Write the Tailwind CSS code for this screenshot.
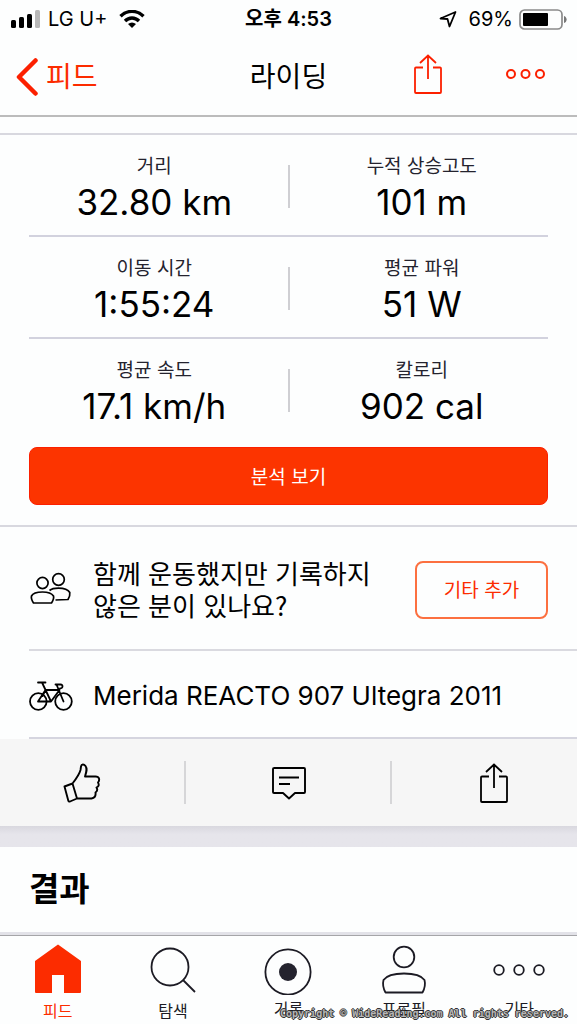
<!DOCTYPE html>
<html lang="ko">
<head>
<meta charset="utf-8">
<meta name="viewport" content="width=device-width, initial-scale=1">
<title>라이딩</title>
<script src="https://cdn.jsdelivr.net/npm/@tailwindcss/browser@4"></script>
</head>
<body class="relative flex min-h-screen flex-col bg-[#fdfefe] font-['Inter','Noto_Sans_CJK_KR',sans-serif] text-black">

<!-- Status bar -->
<div class="grid h-[38px] grid-cols-[1fr_auto_1fr] items-center px-2.5 text-xl leading-6">
  <div class="flex items-center gap-2">
    <svg class="h-[18px] w-[30px]" viewBox="0 0 30 18"><rect x="1" y="10" width="5" height="8" rx="1.5"/><rect x="9" y="7" width="5" height="11" rx="1.5"/><rect x="17" y="4" width="5" height="14" rx="1.5"/><rect x="25" y="0" width="5" height="18" rx="1.5" fill="#b8b8b8"/></svg>
    <span>LG U+</span>
    <svg class="ml-1 h-[18px] w-[26px]" viewBox="0 0 26 18" fill="none" stroke="#000" stroke-width="3.4"><path d="M1.5 6.2C8-.2 18-.2 24.500 6.200"/><path d="M6 11C10 7 16 7 20 11"/><path d="M13 18L9 14C11.500 12 14.500 12 17 14Z" fill="#000" stroke="none"/></svg>
  </div>
  <div class="font-semibold">오후 4:53</div>
  <div class="flex items-center justify-end">
    <svg class="mr-3 h-[17px] w-[18px]" viewBox="0 0 18 17" fill="none" stroke="#000" stroke-width="1.8" stroke-linejoin="round"><path d="M16.500 1L1.500 7.500L8.500 8L10.500 15.500Z"/></svg>
    <span>69%</span>
    <svg class="ml-1.5 h-[21px] w-[48px]" viewBox="0 0 48 21"><rect x="1" y="1" width="42" height="19" rx="4.500" fill="none" stroke="#8a8a8a" stroke-width="1.700"/><rect x="4" y="4" width="25" height="13" rx="1"/><path d="M45 7C48.500 8 48.500 13 45 14Z" fill="#777"/></svg>
  </div>
</div>

<!-- Navigation -->
<header class="grid h-[79px] grid-cols-[1fr_auto_1fr] items-center border-b-2 border-[#bcbcbc] px-4 text-[28px] leading-9">
  <a href="#" class="flex items-center gap-2 text-[#fc2c00]">
    <svg class="h-[38px] w-[22px]" viewBox="0 0 22 38" fill="none" stroke="#fc2000" stroke-width="4.500" stroke-linecap="round" stroke-linejoin="round"><path d="M19.500 2.500L3 19L19.500 35.500"/></svg>
    <span>피드</span>
  </a>
  <h1>라이딩</h1>
  <div class="flex items-center justify-end gap-[62px] pr-4 pb-1.5">
    <button type="button" aria-label="공유"><svg class="block h-10 w-[30px]" viewBox="0 0 30 40" fill="none" stroke="#fc2000" stroke-width="1.800"><path d="M10 13.500H3Q2 13.500 2 14.500V38Q2 39 3 39H27Q28 39 28 38V14.500Q28 13.500 27 13.500H20M15 25V2M7 9L15 1.500L23 9"/></svg></button>
    <button type="button" aria-label="더 보기"><svg class="block h-3 w-[40px]" viewBox="0 0 40 12" fill="none" stroke="#fc2000" stroke-width="2"><circle cx="6" cy="6" r="4"/><circle cx="20.500" cy="6" r="4"/><circle cx="35" cy="6" r="4"/></svg></button>
  </div>
</header>

<main class="flex flex-1 flex-col">
  <div class="h-4"></div>

  <!-- Ride statistics -->
  <section class="border-t-2 border-b-2 border-[#d8d8df] px-[29px] pb-5">
    <dl>
      <div class="grid h-[102px] grid-cols-[1fr_2px_1fr] items-center border-b-2 border-[#d2d2de] text-center">
        <div class="pt-1.5 pr-2"><dt class="text-[19px] leading-7 text-[#24232e]">거리</dt><dd class="text-[35px] leading-[42px]">32.80 km</dd></div>
        <div class="mt-0.5 h-[43px] bg-[#cfcfd3]"></div>
        <div class="pt-1.5 pl-1.5"><dt class="text-[19px] leading-7 text-[#24232e]">누적 상승고도</dt><dd class="text-[35px] leading-[42px]">101 m</dd></div>
      </div>
      <div class="grid h-[102px] grid-cols-[1fr_2px_1fr] items-center border-b-2 border-[#d2d2de] text-center">
        <div class="pt-1.5 pr-2"><dt class="text-[19px] leading-7 text-[#24232e]">이동 시간</dt><dd class="text-[35px] leading-[42px]">1:55:24</dd></div>
        <div class="mt-0.5 h-[43px] bg-[#cfcfd3]"></div>
        <div class="pt-1.5 pl-1.5"><dt class="text-[19px] leading-7 text-[#24232e]">평균 파워</dt><dd class="text-[35px] leading-[42px]">51 W</dd></div>
      </div>
      <div class="grid h-[102px] grid-cols-[1fr_2px_1fr] items-center border-b-2 border-transparent text-center">
        <div class="pt-1.5 pr-2"><dt class="text-[19px] leading-7 text-[#24232e]">평균 속도</dt><dd class="text-[35px] leading-[42px]">17.1 km/h</dd></div>
        <div class="mt-0.5 h-[43px] bg-[#cfcfd3]"></div>
        <div class="pt-1.5 pl-1.5"><dt class="text-[19px] leading-7 text-[#24232e]">칼로리</dt><dd class="text-[35px] leading-[42px]">902 cal</dd></div>
      </div>
    </dl>
    <button type="button" class="mt-1.5 block h-[58px] w-full rounded-lg border border-[#fc2000] bg-[#fc3400] pt-1 text-[19px] text-white">분석 보기</button>
  </section>

  <!-- Companions and gear -->
  <section class="pl-[29px]">
    <div class="flex h-[124px] items-center border-b-2 border-[#dadae0] pr-[29px]">
      <svg class="h-8 w-[44px] shrink-0" viewBox="0 0 44 32" fill="none" stroke="#000" stroke-width="1.700" stroke-linejoin="round"><circle cx="13.500" cy="11" r="5.600"/><circle cx="29.500" cy="7.500" r="5.800"/><path d="M4.500 31C2.500 28 2 26 2.500 24C4 21 9 20 13.500 20S22.500 21 24.500 24C25 26 24.500 28 22.500 31Z"/><path d="M20.500 18.500C23 16.500 26 16.200 29.500 16.200C34 16.200 39 17.500 40.800 20.500C41.200 23 40.500 25 39 27.500L26.500 28"/></svg>
      <p class="ml-5 flex-1 pt-0.5 font-['Noto_Sans_CJK_KR',sans-serif] text-[26px] leading-8">함께 운동했지만 기록하지<br>않은 분이 있나요?</p>
      <button type="button" class="mt-1 h-[58px] w-[133px] shrink-0 rounded-lg border-2 border-[#fc7040] pt-0.5 text-[19px] text-[#fc2c00]">기타 추가</button>
    </div>
    <div class="flex h-[88px] items-center border-b-2 border-[#d5d5df] pt-1">
      <svg class="h-[30px] w-[44px] shrink-0" viewBox="0 0 44 30" fill="none" stroke="#000" stroke-width="1.800" stroke-linecap="round" stroke-linejoin="round"><circle cx="9.300" cy="20.500" r="8.300"/><circle cx="34.500" cy="20.500" r="8.300"/><path d="M9 1.500H16.500M13 1.500L22 20.500H9L16.500 9H30.500L22 20.500M26.500 3.500H31.500C34.500 3.500 34 7.500 31 7.500M27.500 3.500L34.500 20.500M16.500 9L13.500 15"/></svg>
      <span class="ml-5 text-[26px] leading-8">Merida REACTO 907 Ultegra 2011</span>
    </div>
  </section>

  <!-- Social actions -->
  <div class="grid h-[87px] grid-cols-[1fr_206px_1fr] items-center bg-[#f6f6f6]">
    <button type="button" aria-label="좋아요" class="flex h-[43px] items-center justify-center border-r-2 border-[#d6d6d8] pr-5">
      <svg class="h-10 w-[38px]" viewBox="0 0 38 40" fill="none" stroke="#000" stroke-width="1.900" stroke-linejoin="round"><path d="M1.500 23.500L9.500 20.500C13 16 16.500 11 17.500 7L18 3.500C18.500 .8 21 1 22.500 3C24.500 6 23.500 9 22 13.500H32.500C36.500 13.500 37 17 35 19.500C36.500 22 35.500 23.500 33.500 24.500C35 27 34 28.500 32.500 29.500C33 33 31.500 35 28.500 35.500H14L7 38.500C6 38.800 5.600 38.500 5.400 38ZM9.500 20.500L14 35.500"/></svg>
    </button>
    <button type="button" aria-label="댓글" class="flex h-[43px] items-center justify-center border-r-2 border-[#d6d6d8] pl-0.5">
      <svg class="h-[34px] w-[36px]" viewBox="0 0 36 34" fill="none" stroke="#000" stroke-width="1.900" stroke-linejoin="round"><path d="M2.500 2H33Q34 2 34 3V26Q34 27 33 27H24L18 32.500L12 27H3Q2 27 2 26V3Q2 2 3 2M8 11.500H28M8 18H19"/></svg>
    </button>
    <button type="button" aria-label="공유" class="flex h-[43px] items-center justify-center pl-5">
      <svg class="h-10 w-[30px]" viewBox="0 0 30 40" fill="none" stroke="#000" stroke-width="1.800"><path d="M10 13.500H3Q2 13.500 2 14.500V38Q2 39 3 39H27Q28 39 28 38V14.500Q28 13.500 27 13.500H20M15 25V2M7 9L15 1.500L23 9"/></svg>
    </button>
  </div>
  <div class="h-[21px] bg-linear-to-b from-[#d9d8df] to-[#e6e5eb] to-40%"></div>

  <!-- Results -->
  <section class="flex-1 px-[29px] pt-5">
    <h2 class="text-[33px] leading-11 font-bold">결과</h2>
  </section>
</main>

<!-- Tab bar -->
<nav class="grid h-[92px] grid-cols-5 border-t-3 border-[#e2e2e8] text-center text-base leading-5 text-[#1c1b24] shadow-[inset_0_1px_0_#a5a5a8]">
  <a href="#" class="flex flex-col items-center pt-2 text-[#fc2c00]">
    <svg class="mb-1.5 h-[52px] w-[48px]" viewBox="0 0 48 52"><path d="M24 1.500L47 18V49Q47 50 46 50H30V32H18V50H2Q1 50 1 49V18Z" fill="#fc2c00"/></svg>피드</a>
  <a href="#" class="flex flex-col items-center pt-2">
    <svg class="mb-1.5 h-[52px] w-[46px]" viewBox="0 0 46 52" fill="none" stroke="#1c1b24" stroke-width="1.800"><circle cx="20" cy="24" r="18.500"/><path d="M33 37L45 49"/></svg>탐색</a>
  <a href="#" class="flex flex-col items-center pt-2">
    <svg class="mb-1 h-[52px] w-[48px]" viewBox="0 0 48 52"><circle cx="24" cy="29" r="22.600" fill="none" stroke="#1c1b24" stroke-width="1.800"/><circle cx="24" cy="29" r="9" fill="#24232e"/></svg>기록</a>
  <a href="#" class="flex flex-col items-center pt-2">
    <svg class="mb-1 h-[52px] w-[46px]" viewBox="0 0 46 52" fill="none" stroke="#1c1b24" stroke-width="1.800" stroke-linejoin="round"><circle cx="23" cy="14" r="10.300"/><path d="M4.500 49.500C2 45 1.500 41 2.500 37C6 32 14 30.500 23 30.500S40 32 43.500 37C44.500 41 44 45 41.500 49.500Z"/></svg>프로필</a>
  <a href="#" class="flex flex-col items-center pt-2">
    <svg class="mb-1 h-[52px] w-[52px]" viewBox="0 0 52 52" fill="none" stroke="#1c1b24" stroke-width="1.800"><circle cx="6" cy="27" r="4.800"/><circle cx="26" cy="27" r="4.800"/><circle cx="46" cy="27" r="4.800"/></svg>기타</a>
</nav>

<p class="absolute right-2 bottom-1 font-['DejaVu_Sans_Mono',monospace] text-[10px] leading-3 font-bold whitespace-nowrap text-[#b5b5b5] [text-shadow:1px_0_#333,-1px_0_#333,0_1px_#333,0_-1px_#333]">Copyright © WideReading.com All rights reserved.</p>
</body>
</html>
